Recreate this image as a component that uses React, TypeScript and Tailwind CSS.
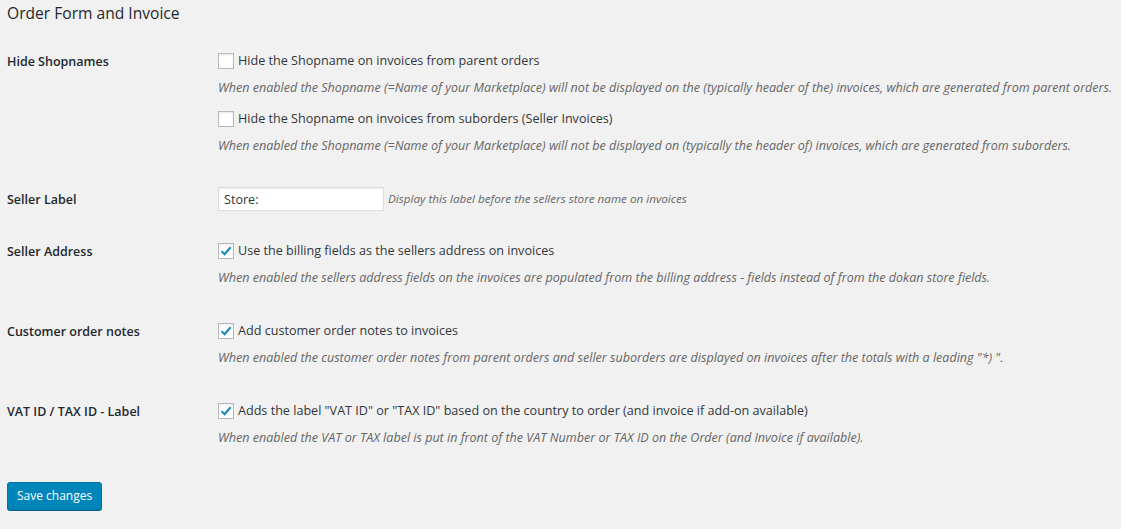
import React from "react";

const font = { fontFamily: '"Open Sans", "Noto Sans", sans-serif' };

function Check({ checked, label }: { checked?: boolean; label: string }) {
  return (
    <div className="flex items-center h-5">
      <span className="relative w-4 h-4 border border-[#b4b9be] bg-white shadow-[inset_0_1px_2px_rgba(0,0,0,0.1)] shrink-0">
        {checked && (
          <svg viewBox="0 0 16 16" className="absolute -left-[1px] -top-[1px] w-4 h-4">
            <path d="M3.5 8.2 L6.6 11.2 L12.6 4.2" fill="none" stroke="#1e8cbe" strokeWidth="2.2" />
          </svg>
        )}
      </span>
      <span className="ml-[4px] text-[12.6px] text-[#32373c]">{label}</span>
    </div>
  );
}

function Desc({ children }: { children: React.ReactNode }) {
  return <p className="mt-2 text-[12.55px] leading-[18px] italic text-[#666]">{children}</p>;
}

function Row({
  label,
  children,
  className,
}: {
  label: string;
  children: React.ReactNode;
  className?: string;
}) {
  return (
    <div className={"flex " + (className ?? "")}>
      <div className="w-[211px] shrink-0 pt-[1px] text-[12.5px] font-semibold text-[#23282d] leading-5">{label}</div>
      <div className="flex-1">{children}</div>
    </div>
  );
}

export default function App() {
  return (
    <div style={font} className="min-h-[529px] bg-[#f1f1f1] pl-[7px] pt-[3px] text-[#23282d]">
      <h2 className="text-[15.6px] leading-5 font-normal">Order Form and Invoice</h2>

      <Row label="Hide Shopnames" className="mt-[28px]">
        <Check label="Hide the Shopname on invoices from parent orders" />
        <Desc>
          When enabled the Shopname (=Name of your Marketplace) will not be displayed on the (typically header of the) invoices, which are generated from parent orders.
        </Desc>
        <div className="mt-3">
          <Check label="Hide the Shopname on invoices from suborders (Seller Invoices)" />
        </div>
        <Desc>
          When enabled the Shopname (=Name of your Marketplace) will not be displayed on (typically the header of) invoices, which are generated from suborders.
        </Desc>
      </Row>

      <Row label="Seller Label" className="mt-[32px] items-center">
        <div className="flex items-center">
          <input
            readOnly
            value="Store:"
            className="w-[166px] h-6 border border-[#ddd] bg-white px-[5px] text-[12.6px] text-[#32373c] shadow-[inset_0_1px_2px_rgba(0,0,0,0.07)] outline-none"
          />
          <span className="ml-[4px] text-[11.66px] italic text-[#666]">
            Display this label before the sellers store name on invoices
          </span>
        </div>
      </Row>

      <Row label="Seller Address" className="mt-[30px]">
        <Check checked label="Use the billing fields as the sellers address on invoices" />
        <Desc>
          When enabled the sellers address fields on the invoices are populated from the billing address - fields instead of from the dokan store fields.
        </Desc>
      </Row>

      <Row label="Customer order notes" className="mt-[34px]">
        <Check checked label="Add customer order notes to invoices" />
        <Desc>
          When enabled the customer order notes from parent orders and seller suborders are displayed on invoices after the totals with a leading "*) ".
        </Desc>
      </Row>

      <Row label="VAT ID / TAX ID - Label" className="mt-[34px]">
        <Check checked label='Adds the label "VAT ID" or "TAX ID" based on the country to order (and invoice if add-on available)' />
        <Desc>
          When enabled the VAT or TAX label is put in front of the VAT Number or TAX ID on the Order (and Invoice if available).
        </Desc>
      </Row>

      <button className="block mt-[35px] h-[28px] px-[9px] rounded-[3px] bg-[#0085ba] border border-[#0073aa] shadow-[0_1px_0_#006799] text-white text-[12px] leading-[26px]">
        Save changes
      </button>
    </div>
  );
}
